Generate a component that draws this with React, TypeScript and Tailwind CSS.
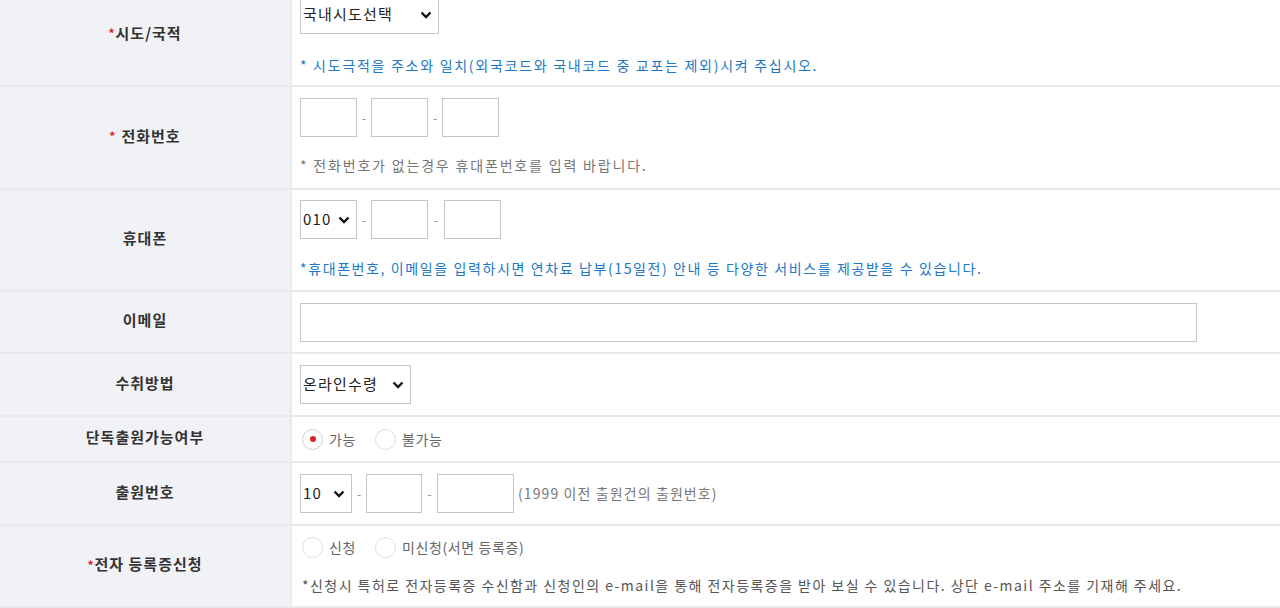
import React from "react";

const font = { fontFamily: '"Noto Sans CJK KR", "Noto Sans", sans-serif' };

function Label({ text, required, spaced }: { text: string; required?: boolean; spaced?: boolean }) {
  return (
    <div className="w-[292px] shrink-0 flex items-center justify-center pb-[3px] bg-[#f1f2f5] border-r-2 border-[#e7eaee] text-[15px] font-bold text-[#333] tracking-[1px]">
      {required && <span className="text-[#e0212b] text-[12px] tracking-normal mr-[1px]">*</span>}
      {spaced && required && <span className="w-[5px]" />}
      <span>{text}</span>
    </div>
  );
}

function Select({ value, width }: { value: string; width: string }) {
  return (
    <div className={`${width} h-[39px] border border-[#c5c5c5] bg-white flex items-center justify-between pl-[2px] pr-[6px] text-[15px] text-[#222]`}>
      <span className="tracking-[1.2px]">{value}</span>
      <svg width="12" height="8" viewBox="0 0 12 8">
        <path d="M1.5 1.5 L6 6 L10.5 1.5" fill="none" stroke="#111" strokeWidth="2.4" />
      </svg>
    </div>
  );
}

function Box({ width }: { width: string }) {
  return <div className={`${width} h-[39px] border border-[#c5c5c5] bg-white`} />;
}

function Dash({ w = "w-[14px]" }: { w?: string }) {
  return <span className={`${w} text-center text-[12px] text-[#888]`}>-</span>;
}

function Radio({ label, checked }: { label: string; checked?: boolean }) {
  return (
    <div className="flex items-center">
      <span className={`w-[21px] h-[21px] rounded-full border ${checked ? "border-[#cfcfcf]" : "border-[#dcdcdc]"} bg-white flex items-center justify-center`}>
        {checked && <span className="w-[6px] h-[6px] rounded-full bg-[#e0212b]" />}
      </span>
      <span className="ml-[6px] text-[14px] text-[#666] tracking-[0.6px]">{label}</span>
    </div>
  );
}

function Row({ children, className }: { children: React.ReactNode; className?: string }) {
  return <div className={`flex border-b-2 border-[#e7e9ed] ${className ?? ""}`}>{children}</div>;
}

export default function App() {
  return (
    <div className="w-[1280px] h-[608px] overflow-hidden bg-white" style={font}>
      <div className="-mt-[16px]">
        <Row className="h-[103px]">
          <Label text="시도/국적" required />
          <div className="flex-1 pl-[8px] pt-[11px]">
            <Select value="국내시도선택" width="w-[139px]" />
            <p className="mt-[21px] text-[14px] text-[#2277c4] tracking-[1.72px]">
              * 시도극적을 주소와 일치(외국코드와 국내코드 중 교포는 제외)시켜 주십시오.
            </p>
          </div>
        </Row>
        <Row className="h-[103px]">
          <Label text="전화번호" required spaced />
          <div className="flex-1 pl-[8px] pt-[11px]">
            <div className="flex items-center">
              <Box width="w-[57px]" />
              <Dash />
              <Box width="w-[57px]" />
              <Dash />
              <Box width="w-[57px]" />
            </div>
            <p className="mt-[18px] text-[14px] text-[#777] tracking-[1.82px]">
              * 전화번호가 없는경우 휴대폰번호를 입력 바랍니다.
            </p>
          </div>
        </Row>
        <Row className="h-[102px]">
          <Label text="휴대폰" />
          <div className="flex-1 pl-[8px] pt-[10px]">
            <div className="flex items-center">
              <Select value="010" width="w-[57px]" />
              <Dash />
              <Box width="w-[57px]" />
              <Dash w="w-[16px]" />
              <Box width="w-[57px]" />
            </div>
            <p className="mt-[19px] text-[14px] text-[#2277c4] tracking-[1.61px]">
              *휴대폰번호, 이메일을 입력하시면 연차료 납부(15일전) 안내 등 다양한 서비스를 제공받을 수 있습니다.
            </p>
          </div>
        </Row>
        <Row className="h-[62px]">
          <Label text="이메일" />
          <div className="flex-1 pl-[8px] flex items-center">
            <Box width="w-[897px]" />
          </div>
        </Row>
        <Row className="h-[63px]">
          <Label text="수취방법" />
          <div className="flex-1 pl-[8px] flex items-center">
            <Select value="온라인수령" width="w-[111px]" />
          </div>
        </Row>
        <Row className="h-[46px]">
          <Label text="단독출원가능여부" />
          <div className="flex-1 pl-[10px] flex items-center gap-[19px]">
            <Radio label="가능" checked />
            <Radio label="불가능" />
          </div>
        </Row>
        <Row className="h-[63px]">
          <Label text="출원번호" />
          <div className="flex-1 pl-[8px] flex items-center">
            <Select value="10" width="w-[52px]" />
            <Dash />
            <Box width="w-[56px]" />
            <Dash w="w-[15px]" />
            <Box width="w-[77px]" />
            <span className="ml-[4px] text-[14px] text-[#777] tracking-[1.1px]">(1999 이전 출원건의 출원번호)</span>
          </div>
        </Row>
        <Row className="h-[82px]">
          <Label text="전자 등록증신청" required />
          <div className="flex-1 pl-[10px] pt-[11px]">
            <div className="flex items-center gap-[19px]">
              <Radio label="신청" />
              <Radio label="미신청(서면 등록증)" />
            </div>
            <p className="mt-[17px] text-[14px] text-[#555] tracking-[1.45px] whitespace-nowrap">
              *신청시 특허로 전자등록증 수신함과 신청인의 e-mail을 통해 전자등록증을 받아 보실 수 있습니다. 상단 e-mail 주소를 기재해 주세요.
            </p>
          </div>
        </Row>
      </div>
    </div>
  );
}
